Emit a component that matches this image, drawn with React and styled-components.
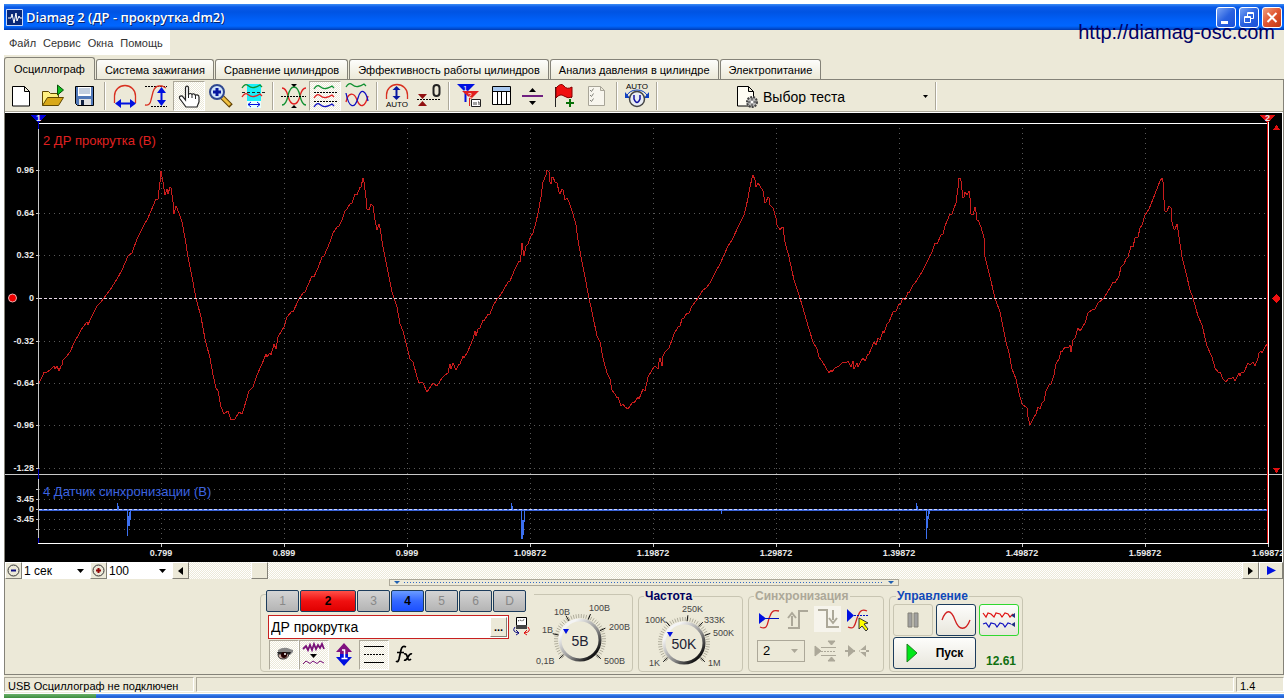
import { useState } from 'react';
import styled, { createGlobalStyle, css } from 'styled-components';

// Data
const wave =
  '39,383 43,375 44,372 46,373 50,370 54,366 55,369 57,366 59,371 61,366 62,365 63,360 67,356 70,352 75,341 78,336 81,330 87,322 88,325 90,320 97,306 100,303 104,298 110,290 117,279 122,270 128,256 132,253 137,239 143,227 148,218 156,199 158,199 160,182 161,171 163,182 165,195 167,189 168,194 170,187 171,188 173,202 173,212 174,214 176,206 179,213 182,222 185,238 188,257 192,277 196,298 201,317 205,339 210,358 213,375 216,388 218,391 221,407 224,414 228,411 231,420 235,419 239,412 242,414 244,408 249,391 253,387 257,375 262,364 266,354 267,357 270,353 271,355 274,344 276,349 278,337 284,327 287,317 292,311 293,312 299,299 ' +
  '303,293 305,292 312,276 314,277 316,272 318,268 322,257 324,256 327,249 330,242 333,233 337,227 339,226 342,220 345,211 347,209 350,204 352,203 355,194 357,195 360,187 361,187 363,178 364,182 366,198 367,209 369,210 371,204 373,206 375,220 377,230 379,224 380,228 383,247 388,272 392,292 394,298 397,307 400,324 403,331 407,347 410,359 413,362 417,377 419,383 422,382 423,383 427,392 431,386 433,383 437,386 442,378 444,376 448,373 450,364 451,369 453,363 456,370 459,364 460,364 463,356 464,358 468,351 473,339 475,331 476,336 478,329 480,328 483,320 484,321 488,314 490,314 493,306 497,299 499,297 503,291 508,282 510,281 515,269 519,261 520,262 521,255 522,243 524,256 526,246 528,244 530,238 533,233 536,222 538,213 541,197 543,182 546,175 547,170 549,172 550,182 551,184 552,177 553,177 555,182 557,183 559,192 560,194 562,189 563,190 565,200 567,198 569,202 573,214 576,225 578,240 581,257 585,277 589,298 592,312 597,336 600,342 603,358 607,373 610,379 612,390 615,394 617,398 618,397 621,406 623,404 625,407 628,409 ' +
  '630,406 633,402 634,403 638,397 639,399 643,389 645,391 648,377 652,370 655,366 658,369 659,362 660,358 662,366 663,356 665,352 669,348 673,337 674,334 678,327 680,326 682,319 684,318 687,313 689,313 692,306 693,305 698,298 703,290 706,288 710,283 716,271 720,264 724,255 728,246 732,240 740,223 744,215 746,207 748,198 750,187 752,178 753,175 755,180 756,187 758,183 760,186 763,191 765,203 766,202 768,197 769,198 770,205 773,208 776,218 777,225 780,230 782,227 783,227 785,242 789,257 794,280 800,298 805,315 809,329 813,342 817,349 819,357 822,361 826,368 829,373 831,370 832,372 835,368 839,366 843,362 846,363 848,361 851,367 853,361 854,369 857,363 858,367 861,361 863,358 865,361 868,354 869,354 874,342 876,345 878,338 880,340 883,331 884,333 887,324 889,322 893,312 896,311 899,304 900,305 903,298 905,300 908,292 909,293 913,285 915,283 922,272 927,262 932,252 935,243 937,244 941,235 943,234 945,226 950,214 952,214 954,208 956,203 958,188 959,178 ' +
  '960,178 961,181 963,198 964,197 965,192 967,195 969,191 970,198 971,214 973,215 975,207 976,212 977,220 978,220 981,227 984,238 985,257 990,277 995,298 1000,312 1006,342 1009,353 1012,369 1016,379 1019,393 1022,404 1027,408 1028,417 1030,425 1033,419 1036,414 1038,407 1040,409 1042,403 1044,401 1046,391 1049,385 1051,384 1054,375 1056,364 1059,359 1061,351 1062,352 1065,347 1069,347 1070,345 1071,352 1073,340 1075,338 1078,328 1080,331 1085,323 1088,313 1092,310 1095,309 1098,303 1104,298 1110,288 1113,282 1115,283 1119,276 1121,267 1124,264 1126,259 1128,257 1131,246 1133,247 1135,238 1138,237 1140,228 1142,225 1145,215 1149,209 1155,194 1160,181 1162,178 1163,182 1164,200 1165,211 1167,211 1169,206 1171,208 1172,222 1174,229 1175,229 1177,224 1178,230 1182,257 1186,273 1190,290 1193,298 1198,316 1202,325 1207,346 1212,357 1215,368 1218,372 1220,372 1223,379 1226,382 1229,378 1231,379 1233,377 1235,381 1239,373 1240,376 1241,373 1244,372 1248,363 1250,365 1253,362 1255,366 1258,358 1259,353 1261,351 1262,353 1264,349 1267,344';

const levels = [
  ['0.96', 170], ['0.64', 213], ['0.32', 255], ['0', 298],
  ['-0.32', 341], ['-0.64', 383], ['-0.96', 425], ['-1.28', 468],
];

const syncLevels = [['', 489], ['3.45', 499], ['0', 509], ['-3.45', 519], ['', 529]];

const times = [
  ['0.799', 161], ['0.899', 284], ['0.999', 407], ['1.09872', 530], ['1.19872', 653],
  ['1.29872', 776], ['1.39872', 899], ['1.49872', 1022], ['1.59872', 1145], ['1.69872', 1268],
];

const tabs = [
  'Осциллограф', 'Система зажигания', 'Сравнение цилиндров',
  'Эффективность работы цилиндров', 'Анализ давления в цилиндре', 'Электропитание',
];

const channels = ['1', '2', '3', '4', '5', '6', 'D'];

// Styled Components
const GlobalStyle = createGlobalStyle`
  * { box-sizing: border-box; }
  body {
    margin: 0;
    background: #fff;
    font: 11px/14px 'Liberation Sans', Arial, sans-serif;
    color: #000;
  }
  button, input, select { font: inherit; color: inherit; margin: 0; }
  svg { display: block; }
`;

const checker = css`
  background: repeating-conic-gradient(#fff 0 25%, #ece9d8 0 50%) 0 0 / 2px 2px;
`;

const Window = styled.div`
  position: relative;
  margin: 4px 4px 0;
  background: #ece9d8;
`;

const TitleBar = styled.header`
  display: flex;
  align-items: center;
  gap: 3px;
  height: 26px;
  padding: 0 2px;
  background: linear-gradient(#3c8cf4 0, #0a5ae8 3px, #0054e3 8px, #0060f8 16px, #0066ff 22px, #0048c8 25px, #0038b0 26px);
  h1 {
    flex: 1;
    margin: 0;
    color: #fff;
    font: 600 13px/20px 'Open Sans', sans-serif;
    text-shadow: 1px 1px #0a246a;
  }
`;

const CaptionButton = styled.button`
  width: 20px;
  height: 21px;
  padding: 0;
  border: 1px solid #fff;
  border-radius: 3px;
  background: ${({ $close }) =>
    $close ? 'linear-gradient(135deg, #f0a080, #e05430 50%, #c03810)' : 'linear-gradient(135deg, #7aa4f4, #2a62e0 50%, #1a50d8)'};
`;

const SiteLink = styled.a`
  position: absolute;
  top: 16px;
  right: 9px;
  color: #000066;
  font-size: 20px;
  line-height: 24px;
  text-decoration: none;
`;

const Menu = styled.nav`
  display: flex;
  gap: 7px;
  width: 166px;
  height: 25px;
  padding: 0 5px;
  background: #fff;
  button {
    padding: 0;
    border: 0;
    background: none;
    color: #333;
  }
`;

const Tabs = styled.div`
  display: flex;
  align-items: flex-end;
  gap: 1px;
  height: 24px;
`;

const Tab = styled.button`
  height: ${({ $active }) => ($active ? 23 : 20)}px;
  padding: 0 ${({ $active }) => ($active ? 9 : 8)}px;
  margin-bottom: ${({ $active }) => ($active ? -1 : 0)}px;
  border: 1px solid #848278;
  border-bottom: 0;
  border-radius: 3px 3px 0 0;
  background: ${({ $active }) => ($active ? '#ece9d8' : 'linear-gradient(#fdfdfb, #ece9d8)')};
  white-space: nowrap;
`;

const Body = styled.main`
  border: solid #848278;
  border-width: 1px 1px 0;
`;

const Toolbar = styled.div`
  display: flex;
  height: 33px;
  padding-top: 1px;
  border-bottom: 1px solid #fff;
  box-shadow: inset 0 -1px #aca899;
`;

const ToolButton = styled.button`
  width: ${({ $size }) => $size ?? 32}px;
  height: 30px;
  padding: 0;
  border: 1px solid transparent;
  background: none;
  ${({ $pressed }) => $pressed && css`
    ${checker}
    border-color: #aca899 #fff #fff #aca899;
  `}
  svg { margin: -1px; }
`;

const Separator = styled.span`
  width: 2px;
  height: 28px;
  margin: 1px 3px;
  border-left: 1px solid #aca899;
  border-right: 1px solid #fff;
`;

const TestPicker = styled.label`
  display: flex;
  align-items: center;
  gap: 5px;
  width: 198px;
  margin-left: 73px;
  padding-right: 3px;
`;

const PlainSelect = styled.select`
  appearance: none;
  flex: 1;
  min-width: 0;
  height: 100%;
  padding: 0 ${({ $pad }) => $pad ?? 3}px;
  border: 0;
  border-radius: 0;
  background: ${({ $fill }) => $fill ?? 'transparent'};
  font-size: ${({ $font }) => $font ?? 12}px;
  &:disabled { opacity: 1; }
`;

const SelectArrow = styled.svg`
  width: 7px;
  height: 4px;
  margin-right: 6px;
  pointer-events: none;
`;

const Plot = styled.svg`
  width: 100%;
  border-right: 1px solid #fff;
  background: #000;
  text { font-family: 'Liberation Sans', Arial, sans-serif; }
`;

const AxisLabel = styled.text`
  font-size: 9px;
  font-weight: bold;
  fill: #e8e8e8;
`;

const ScrollRow = styled.div`
  display: flex;
  height: 17px;
`;

const RaisedButton = styled.button`
  flex: none;
  width: ${({ $width }) => $width ?? 17}px;
  padding: 0;
  border: 1px solid;
  border-color: #fff #848278 #848278 #fff;
  background: #ece9d8;
  font-weight: bold;
  line-height: 8px;
  svg { margin: auto; }
`;

const Combo = styled.label`
  display: flex;
  align-items: center;
  width: ${({ $width }) => $width}px;
  background: #fff;
`;

const ScrollTrack = styled.input`
  appearance: none;
  flex: 1;
  min-width: 0;
  height: 17px;
  ${checker}
  &::-webkit-slider-thumb {
    appearance: none;
    width: 17px;
    height: 17px;
    border: 1px solid;
    border-color: #fff #848278 #848278 #fff;
    background: #ece9d8;
  }
`;

const Splitter = styled.div`
  display: flex;
  align-items: center;
  gap: 4px;
  width: 510px;
  height: 7px;
  margin: 0 auto;
  padding: 0 4px;
  border: 1px solid #aca899;
`;

const Dots = styled.span`
  flex: 1;
  height: 1px;
  background: repeating-linear-gradient(90deg, #316ac5 0 1px, transparent 1px 3px);
`;

const Controls = styled.section`
  display: flex;
  justify-content: center;
  gap: 5px;
  height: 88px;
  padding: 3px 5px 0 0;
`;

const Group = styled.fieldset`
  min-width: 0;
  width: ${({ $width }) => $width}px;
  height: 83px;
  margin: 0;
  padding: 0 3px;
  border: 1px solid #c8c5b2;
  border-radius: 4px;
  legend {
    margin-left: ${({ $indent }) => $indent ?? 2}px;
    padding: 0 1px;
    color: ${({ $color }) => $color};
    font-size: 12px;
    font-weight: bold;
    line-height: 14px;
  }
`;

const ChannelGroup = styled.div`
  display: flex;
  width: 373px;
  height: 78px;
  margin-top: 5px;
  padding-left: 5px;
  border: 1px solid #c8c5b2;
  border-radius: 4px;
`;

const ChannelPanel = styled.div`
  width: 268px;
  margin-top: -5px;
`;

const ChannelRow = styled.div`
  display: flex;
  gap: 1px;
  padding-bottom: 3px;
  background: #ece9d8;
`;

const fills = { 2: 'linear-gradient(#ff5048, #f01010 50%, #e00000)', 4: 'linear-gradient(#6a9cff, #3468ff 50%, #1c50ff)' };

const ChannelButton = styled.button`
  width: ${({ $ch }) => ($ch === '2' ? 56 : 33)}px;
  height: 22px;
  padding: 0;
  border: 1px solid #1c3c5c;
  border-radius: 2px;
  background: ${({ $ch }) => fills[$ch] ?? 'linear-gradient(#d4d4d4, #b4b4b4)'};
  color: ${({ $ch }) => (fills[$ch] ? '#000' : '#888')};
  font-size: 12px;
  font-weight: ${({ $ch }) => (fills[$ch] ? 'bold' : 'normal')};
`;

const NameRow = styled.div`
  display: flex;
  gap: 3px;
  margin-left: 2px;
`;

const NameBox = styled.div`
  display: flex;
  width: 241px;
  height: 24px;
  padding: 1px;
  border: 1px solid #c82020;
  background: #fff;
  input {
    flex: 1;
    min-width: 0;
    padding: 0 1px;
    border: 0;
    font-size: 14px;
  }
`;

const IconRow = styled.div`
  display: flex;
  margin: 1px 0 0 3px;
`;

const Knob = styled.svg`
  flex: none;
  text {
    font: 9px 'Liberation Sans', Arial, sans-serif;
    fill: #444;
  }
  text.value {
    font-size: 14px;
    fill: #223;
    text-anchor: middle;
  }
`;

const SyncIcons = styled.div`
  display: flex;
  align-items: center;
  gap: ${({ $gap }) => $gap ?? 5}px;
  height: ${({ $height }) => $height}px;
`;

const SyncCombo = styled.label`
  display: flex;
  align-items: center;
  width: 48px;
  height: 22px;
  margin-left: 5px;
  border: 1px solid #aca899;
`;

const RunGrid = styled.div`
  display: grid;
  grid-template-columns: 40px 40px 40px;
  grid-template-rows: 32px 32px;
  gap: 1px 3px;
  padding-top: 1px;
`;

const RunButton = styled.button`
  display: flex;
  align-items: center;
  justify-content: center;
  gap: 18px;
  grid-column: span ${({ $span }) => $span ?? 1};
  padding: 0;
  border: 1px solid ${({ $edge }) => $edge ?? '#1c3c5c'};
  border-radius: 3px;
  background: ${({ $edge }) => ($edge === '#c8c5b2' ? '#ece9d8' : 'linear-gradient(#fdfdfb, #e8e6dc)')};
  font-size: 12px;
  font-weight: bold;
`;

const Voltage = styled.output`
  align-self: end;
  margin-left: 7px;
  color: #107010;
  font-size: 12px;
  font-weight: bold;
  line-height: 16px;
`;

const StatusBar = styled.footer`
  display: flex;
  gap: 2px;
  height: 20px;
  padding: 2px 0 1px;
  border-top: 1px solid #848278;
  border-bottom: 1px solid #fff;
`;

const StatusCell = styled.span`
  flex: ${({ $width }) => ($width ? `0 0 ${$width}px` : 1)};
  padding: 1px 3px;
  border: 1px solid;
  border-color: #aca899 #fff #fff #aca899;
`;

const TaskStrip = styled.div`
  height: 4px;
  background:
    linear-gradient(#6ab06a, #3c8c3c) 0 0 / 92px 4px no-repeat,
    linear-gradient(#5a9cf8, #2464d8 2px, #2464d8);
`;

// Icons
const Sine = ({ y, color, x = 4, ...rest }) => (
  <path
    d={`M${x} ${y + 2}q3 -5 6 -2.500t6 2t6 -2.500l2 2`}
    fill='none' stroke={color} strokeWidth='1.300' {...rest}
  />
);

const icons = {
  new: <path d='M7.500 6.500h12l5 5v14.500h-17zM19.500 6.500v5h5' fill='#fff' stroke='#000' />,
  open: (
    <>
      <path d='M5.500 25.500v-14h6l2 2h8v4' fill='#fff080' stroke='#604800' />
      <path d='M5.500 25.500l5 -8h16l-5 8z' fill='#d8a818' stroke='#604800' />
      <path d='M20.500 5l6 5l-6 5z' fill='#10c020' stroke='#085008' />
    </>
  ),
  save: (
    <>
      <path d='M6.500 6.500h18v19h-16l-2 -2z' fill='#5078b8' stroke='#000' />
      <path d='M9 7h13v9h-13z' fill='#fff' />
      <path d='M10 9h11M10 11h11M10 13h11' stroke='#88a0c0' />
      <path d='M10 19h12v6h-12z' fill='#e0e0e0' />
      <path d='M12 20h3v5h-3z' fill='#102040' />
    </>
  ),
  span: (
    <>
      <path d='M5.500 23v-7a10.500 10.500 0 0 1 21 0v7' fill='none' stroke='#d83020' strokeWidth='1.300' />
      <path d='M11 23.500h11' stroke='#0010e0' strokeWidth='2' />
      <path d='M6 23.500l6 -4.500v9zM27 23.500l-6 -4.500v9z' fill='#0010e0' />
    </>
  ),
  amplitude: (
    <>
      <path d='M4 6.500h22M10 26.500h16' stroke='#000' strokeDasharray='2 1' />
      <path d='M4 25q5 1 6 -5l2 -8q2 -6 6 -6h3l4 2' fill='none' stroke='#d83020' strokeWidth='1.300' />
      <path d='M20.500 12v9' stroke='#0010e0' strokeWidth='2' />
      <path d='M20.500 7l4.500 6h-9zM20.500 26l4.500 -6h-9z' fill='#0010e0' />
    </>
  ),
  hand: (
    <>
      <path
        d='M13 27l-6 -8c-2 -3 2 -4 3 -2l2.500 3v-12c0 -2.500 3 -2.500 3 0v7c0 -2 3.500 -2 3.500 0c0 -2 3.500 -1.500 3.500 1c0 -2 3.500 -1.500 3.500 1v5l-2 5z'
        fill='#fff' stroke='#222' strokeWidth='1.200'
      />
      <path d='M15.500 14v4M19 15v3M22.500 16v3' stroke='#222' />
    </>
  ),
  zoom: (
    <>
      <path d='M17 17l9 9' stroke='#604000' strokeWidth='5' />
      <path d='M17 17l8 8' stroke='#f0c040' strokeWidth='3' />
      <circle cx='12' cy='12' r='7' fill='#d0e4f8' stroke='#304890' strokeWidth='2' />
      <path d='M8 12h8M12 8v8' stroke='#0818a0' strokeWidth='3' />
    </>
  ),
  fit: (
    <>
      <path d='M10 4h14v18h-14z' fill='#18f0f8' />
      <path d='M10 21h14v7h-14z' fill='#e8ffff' />
      <Sine y={6} color='#109030' x={5} />
      <Sine y={15} color='#e02020' x={5} />
      <path d='M5 12.500h23' stroke='#222' strokeDasharray='3 2' />
      <path d='M11 24.500h12M14 22l-3 2.500l3 2.500M20 22l3 2.500l-3 2.500' stroke='#0010e0' fill='none' />
    </>
  ),
  overlap: (
    <>
      <path d='M5 8q4 0 6 8t6 8t6 -8t6 -8' fill='none' stroke='#e02020' strokeWidth='1.300' />
      <path d='M5 25q4 0 6 -9t6 -9t6 9t6 9' fill='none' stroke='#109030' strokeWidth='1.300' />
      <path d='M4 16.500h25' stroke='#000' strokeDasharray='2 1' />
      <path d='M14 4h6l-3 3zM14 28h6l-3 -3z' />
    </>
  ),
  stack: (
    <>
      <Sine y={7} color='#109030' x={5} />
      <Sine y={16} color='#e02020' x={5} />
      <Sine y={25} color='#1010c0' x={5} />
      <path d='M5 12.500h23M5 21.500h23' stroke='#000' strokeDasharray='2 1' />
    </>
  ),
  crossed: (
    <>
      <Sine y={5} color='#109030' x={5} />
      <path d='M5 22c2 -10 8 -10 11 -2s8 8 11 -4' fill='none' stroke='#e02020' strokeWidth='1.300' />
      <path d='M5 13c3 16 9 16 12 5s8 -7 10 3' fill='none' stroke='#1010c0' strokeWidth='1.300' />
    </>
  ),
  autoHeight: (
    <>
      <path d='M5.500 19v-4a10.500 10.500 0 0 1 21 0v4' fill='none' stroke='#d83020' strokeWidth='1.300' />
      <path d='M15.500 8v9' stroke='#0818a0' strokeWidth='2' />
      <path d='M15.500 6l4 4h-8zM15.500 20l4 -4h-8z' fill='#0818a0' />
      <text x='16' y='27' fontSize='8' textAnchor='middle'>AUTO</text>
    </>
  ),
  zero: (
    <>
      <path d='M5 14h9l-4.500 5zM5 26h9l-4.500 -5z' fill='#901010' />
      <path d='M4 19.500h24' stroke='#000' strokeDasharray='2 1' />
      <rect x='20.500' y='5' width='6' height='11' rx='3' fill='none' stroke='#222' strokeWidth='2' />
    </>
  ),
  markers: (
    <>
      <path d='M4 4h18l-9 9z' fill='#0010e0' />
      <path d='M12.500 5v17' stroke='#0010e0' strokeWidth='2' />
      <path d='M9 11h17l-8 8z' fill='#e02020' />
      <path d='M16.500 12v14' stroke='#e02020' />
      <path d='M18.500 19.500h9v7h-9z' fill='#fff' stroke='#222' />
      <path d='M21 22v3M23 22v3M25 22h1v3' stroke='#444' fill='none' />
      <text x='10' y='11' fontSize='8' fill='#fff'>1</text>
      <text x='15' y='18' fontSize='7' fill='#fff'>2</text>
    </>
  ),
  table: (
    <>
      <path d='M7.500 6.500h18v18h-18z' fill='#fff' stroke='#000' />
      <path d='M8 7h17v4h-17z' fill='#a8c8f0' />
      <path d='M7 11.500h19M12.500 11v14M16.500 11v14M21.500 11v14' stroke='#000' />
    </>
  ),
  split: (
    <>
      <path d='M5 16h21' stroke='#702080' strokeWidth='2' />
      <path d='M12 12h7l-3.500 -4zM12 21h7l-3.500 4z' />
    </>
  ),
  flag: (
    <>
      <path d='M6.500 7v20M22.500 7v11' stroke='#222' />
      <path d='M7 8q5 -6 8 -2t8 1v10q-4 2 -8 -1t-8 2z' fill='#f01010' stroke='#800' />
      <path d='M17 23h8M21 19v8' stroke='#087008' strokeWidth='2' />
    </>
  ),
  checklist: (
    <>
      <path d='M7.500 6.500h12l4 4v15h-16zM19.500 6.500v4h4' fill='#f8f6ee' stroke='#a8a598' />
      <path d='M9 10l1.500 1.500l2 -3M9 15l1.500 1.500l2 -3M9 20l1.500 1.500l2 -3' stroke='#808078' fill='none' />
    </>
  ),
  autoVolt: (
    <>
      <text x='16' y='9' fontSize='8' textAnchor='middle'>AUTO</text>
      <path d='M5 17q3 -7 11 -7t11 7' fill='none' stroke='#1040c0' />
      <path d='M4 12v6h5zM28 12v6h-5z' fill='#1040c0' />
      <circle cx='16' cy='19' r='7.500' fill='#e8ecf4' stroke='#444' strokeWidth='1.500' />
      <path d='M13 15v4q3 7 6 0v-4' fill='none' stroke='#1010a0' strokeWidth='1.500' />
    </>
  ),
  eye: (
    <>
      <path d='M9 10q6 -4 12 -1l3 1v2l-3 3h-12z' fill='#888' />
      <path d='M8 12h14l-1 2h-12z' fill='#222' />
      <path d='M9 14h11q-1 5 -6 5t-5 -5' fill='#c8a8a0' stroke='#333' />
      <circle cx='15' cy='15' r='3' fill='#200' />
      <circle cx='16' cy='14' r='1' fill='#fff' />
    </>
  ),
  filter: (
    <>
      <path d='M4 9l3 -3l2 4l2 -5l2 5l2 -6l2 5l2 -4l2 3l2 -4l2 5' fill='none' stroke='#781078' strokeWidth='1.800' />
      <path d='M11 14h7l-3.500 4z' />
      <path d='M4 24l3 -3l4 2.500l3 -2.500l4 2.500l3 -2.500l4 2' fill='none' stroke='#781078' />
    </>
  ),
  invert: (
    <>
      <path d='M15 3l8 9h-4v3h-8v-3h-4z' fill='#801080' />
      <path d='M15 26l8 -9h-4v-3h-8v3h-4z' fill='#0010e0' />
      <path d='M13 10h2.500v8M12.500 18.500h6' stroke='#fff' strokeWidth='1.500' fill='none' />
    </>
  ),
  bounds: (
    <>
      <path d='M5 6.500h20M5 22.500h20' stroke='#000' />
      <path d='M5 14.500h20' stroke='#000' strokeDasharray='2 1' />
    </>
  ),
  fx: (
    <path
      d='M17 7q-4 -2 -5 3l-2 9q-1 4 -3 2M8 12.500h7M15 14q2 -1 3 2l1 3q1 2 3 0M23 14q-2 -1 -4 3t-4 3'
      fill='none' stroke='#000' strokeWidth='1.700'
    />
  ),
};

const Icon = ({ name, size = 32 }) => (
  <svg width={size} height='30' viewBox={size === 32 ? '0 1 32 30' : '0 0 30 30'} aria-hidden='true'>
    {icons[name]}
  </svg>
);

const Arrow = () => (
  <SelectArrow viewBox='0 0 7 4' aria-hidden='true'>
    <path d='M0 0h7l-3.500 4z' />
  </SelectArrow>
);

// Toolbar layout, null is a separator
const tools = [
  'new', 'open', 'save', null, 'span', 'amplitude', 'hand', 'zoom', 'fit', null,
  'overlap', 'stack', 'crossed', null, 'autoHeight', 'zero', null,
  'markers', 'table', 'split', 'flag', 'checklist', null, 'autoVolt', null,
];

const Scope = () => (
  <Plot viewBox='5 113 1277 449' role='img' aria-label='Осциллограмма' shapeRendering='crispEdges'>
    <g stroke='#585858' strokeDasharray='1 4'>
      {levels.filter(([label]) => label !== '0').map(([label, y]) => (
        <path key={label} d={`M39 ${y + 0.5}H1266`} />
      ))}
      {syncLevels.map(([, y]) => <path key={y} d={`M39 ${y + 0.5}H1266`} />)}
      {times.slice(0, -1).map(([label, x]) => <path key={label} d={`M${x + 0.5} 128V542`} />)}
    </g>

    <path d='M5 474.500H1282' stroke='#c8c8c8' />
    <path d='M38.500 128V543M36 489.500h2M36 529.500h2' stroke='#c8c8c8' />
    <path d='M38 123.500H1268M38 543.500H1269' stroke='#fff' />
    <path d='M38.500 120V129M38.500 469V479M38.500 538V543' stroke='#0000c0' />

    <polyline points={wave} fill='none' stroke='#c81c1c' />
    <path d='M39 298.500H1266' stroke='#e8d8e8' strokeDasharray='3 2' />

    <path d='M39 510H1267' stroke='#3c64d8' strokeWidth='2' />
    <path
      d='M117.500 503v7M118.500 506v4M127.500 509v27M128.500 516v10M129.500 512v14M130.500 509v11M511.500 503v7M512.500 506v4M521.500 509v30M522.500 520v19M523.500 520v15M524.500 509v13M721.500 509v5M916.500 503v7M917.500 506v4M926.500 509v30M927.500 516v12M928.500 509v10M929.500 509v5'
      stroke='#3c70f0'
    />
    <path d='M39 509.500H1266' stroke='#d0d8f8' strokeDasharray='3 2' />

    <path d='M1267.500 122V543' stroke='#e01010' />
    <path d='M1268.500 122V543' stroke='#fff' />
    <path d='M31 115h15l-7.500 8z' fill='#0000d8' />
    <path d='M1260 115h15l-7.500 8z' fill='#e01010' />
    <path d='M1273 130h7l-3.500 -5zM1273 468h7l-3.500 5z' fill='#e01010' />
    <path d='M1276.500 294l4 4.500l-4 4.500l-4 -4.500z' fill='#f01010' />
    <circle cx='12.500' cy='298' r='4' fill='#f00000' stroke='#f0b0b0' shapeRendering='auto' />
    <AxisLabel x='36' y='121'>1</AxisLabel>
    <AxisLabel x='1265' y='121'>2</AxisLabel>

    {[...levels, ...syncLevels].map(([label, y]) => (
      <g key={label + y}>
        <path d={`M36 ${y + 0.5}h2`} stroke='#c8c8c8' />
        <AxisLabel x='34' y={y + 3} textAnchor='end'>{label}</AxisLabel>
      </g>
    ))}
    {times.map(([label, x]) => (
      <g key={label}>
        <path d={`M${x + 0.5} 544v3`} stroke='#c8c8c8' />
        <AxisLabel x={x} y='556' textAnchor='middle'>{label}</AxisLabel>
      </g>
    ))}
    <text x='43' y='145' fontSize='13' fill='#e02020'>2 ДР прокрутка (В)</text>
    <text x='43' y='496' fontSize='13' fill='#3c64e0'>4 Датчик синхронизации (В)</text>
  </Plot>
);

const Dial = ({ id, value, labels, majors, width, cx, cy }) => {
  const ticks = Array.from({ length: 46 }, (_, i) => -225 + i * 6);
  const ray = (deg, from, to) => {
    const c = Math.cos((deg * Math.PI) / 180);
    const s = Math.sin((deg * Math.PI) / 180);
    return `M${cx + c * from} ${cy + s * from}L${cx + c * to} ${cy + s * to}`;
  };

  return (
    <Knob width={width} height='74' viewBox={`0 0 ${width} 74`} role='img' aria-label={value}>
      <defs>
        <linearGradient id={id} x1='0' y1='0' x2='1' y2='1'>
          <stop offset='0.200' stopColor='#f4f4f4' />
          <stop offset='0.600' stopColor='#888' />
          <stop offset='0.900' stopColor='#000' />
        </linearGradient>
      </defs>
      <path d={ticks.map((deg) => ray(deg, 22, 26)).join('')} stroke='#b0ad9c' />
      <path d={majors.map((deg) => ray(deg, 22, 28)).join('')} stroke='#111' />
      <circle cx={cx} cy={cy} r='20' fill='#ece9d8' stroke={`url(#${id})`} strokeWidth='3' />
      <path d={`M${cx - 17} ${cy - 11}h6l-3 5z`} fill='#0010e0' />
      <text className='value' x={cx} y={cy + 6}>{value}</text>
      {labels.map(([label, x, y]) => <text key={label} x={x} y={y}>{label}</text>)}
    </Knob>
  );
};

const App = () => {
  // State
  const [activeTab, setActiveTab] = useState(tabs[0]);
  const [name, setName] = useState('ДР прокрутка');

  return (
    <>
      <GlobalStyle />
      <Window>
        <TitleBar>
          <svg width='17' height='17' aria-hidden='true'>
            <path d='M0.500 0.500h16v16h-16z' fill='#082878' stroke='#c8d8f8' />
            <path d='M2 9h3l1 -4l2 9l2 -10l1 8l2 -5l1 2h2' fill='none' stroke='#fff' />
          </svg>
          <h1>Diamag 2 (ДР - прокрутка.dm2)</h1>
          <CaptionButton aria-label='Свернуть'>
            <svg width='18' height='19'><path d='M4 13h7v3h-7z' fill='#fff' /></svg>
          </CaptionButton>
          <CaptionButton aria-label='Восстановить'>
            <svg width='18' height='19'>
              <path d='M7.500 8v-3.500h6v6h-3M4.500 8.500h6v6h-6zM4 9.500h7M7 5.500h7' fill='none' stroke='#fff' />
            </svg>
          </CaptionButton>
          <CaptionButton $close aria-label='Закрыть'>
            <svg width='18' height='19'><path d='M4.500 5l9 9M13.500 5l-9 9' stroke='#fff' strokeWidth='2' /></svg>
          </CaptionButton>
        </TitleBar>
        <SiteLink href='#'>http://diamag-osc.com</SiteLink>

        <Menu>
          {['Файл', 'Сервис', 'Окна', 'Помощь'].map((item) => <button key={item}>{item}</button>)}
        </Menu>

        <Tabs>
          {tabs.map((tab) => (
            <Tab key={tab} $active={tab === activeTab} onClick={() => setActiveTab(tab)}>{tab}</Tab>
          ))}
        </Tabs>

        <Body>
          <Toolbar>
            {tools.map((tool, i) =>
              tool ? (
                <ToolButton key={tool} $pressed={tool === 'hand' || tool === 'stack'} aria-label={tool}>
                  <Icon name={tool} />
                </ToolButton>
              ) : (
                <Separator key={i} />
              )
            )}
            <TestPicker>
              <svg width='24' height='26' aria-hidden='true'>
                <path d='M3.500 2.500h11l5 5v14.500h-16zM14.500 2.500v5h5' fill='#fffdf4' stroke='#000' />
                <circle cx='18' cy='18' r='5' fill='#b8b8b8' stroke='#444' strokeWidth='2' strokeDasharray='2 1' />
                <path d='M14 18h8M18 14v8' stroke='#333' />
                <circle cx='18' cy='18' r='1.500' fill='#fff' />
              </svg>
              <PlainSelect $font={14} $pad={0} aria-label='Выбор теста'>
                <option>Выбор теста</option>
              </PlainSelect>
              <svg width='7' height='3' aria-hidden='true'><path d='M1 0h5l-2.500 3z' /></svg>
            </TestPicker>
            <Separator />
          </Toolbar>

          <Scope />

          <ScrollRow>
            <RaisedButton aria-label='Уменьшить'>
              <svg width='15' height='15'>
                <circle cx='7.500' cy='7.500' r='5.500' fill='none' stroke='#333' />
                <path d='M5 7.500h5' stroke='#101080' strokeWidth='2' />
              </svg>
            </RaisedButton>
            <Combo $width={68}>
              <PlainSelect $pad={2} aria-label='Развёртка'><option>1 сек</option></PlainSelect>
              <Arrow />
            </Combo>
            <RaisedButton aria-label='Увеличить'>
              <svg width='15' height='15'>
                <circle cx='7.500' cy='7.500' r='5.500' fill='none' stroke='#333' />
                <path d='M5 7.500h5M7.500 5v5' stroke='#900808' strokeWidth='2' />
              </svg>
            </RaisedButton>
            <Combo $width={65}>
              <PlainSelect $pad={2} aria-label='Масштаб'><option>100</option></PlainSelect>
              <Arrow />
            </Combo>
            <RaisedButton aria-label='Влево'>
              <svg width='5' height='8'><path d='M5 0v8l-5 -4z' /></svg>
            </RaisedButton>
            <ScrollTrack type='range' defaultValue={6} aria-label='Прокрутка' />
            <RaisedButton aria-label='Вправо'>
              <svg width='5' height='8'><path d='M0 0v8l5 -4z' /></svg>
            </RaisedButton>
            <RaisedButton $width={24} aria-label='Воспроизвести'>
              <svg width='9' height='9'><path d='M0 0v9l9 -4.500z' fill='#0010e0' /></svg>
            </RaisedButton>
          </ScrollRow>

          <Splitter>
            <svg width='6' height='3'><path d='M0 0h6l-3 3z' fill='#2060b0' /></svg>
            <Dots />
            <svg width='6' height='3'><path d='M0 0h6l-3 3z' fill='#2060b0' /></svg>
          </Splitter>

          <Controls>
            <ChannelGroup>
              <ChannelPanel>
                <ChannelRow>
                  {channels.map((ch) => <ChannelButton key={ch} $ch={ch}>{ch}</ChannelButton>)}
                </ChannelRow>
                <NameRow>
                  <NameBox>
                    <input aria-label='Название канала' value={name} onChange={(e) => setName(e.target.value)} />
                    <RaisedButton>...</RaisedButton>
                  </NameBox>
                  <svg width='19' height='24' aria-hidden='true'>
                    <path d='M4.500 2.500h10v8h-10z' fill='#fff' stroke='#000' />
                    <path d='M4 10h11v4h-11z' fill='#444' />
                    <path d='M6 6l2 -1l2 1l3 -2' stroke='#000' fill='none' strokeDasharray='1 1' />
                    <path d='M3 12q-4 5 4 6M4 15l3 3l-3 2' fill='none' stroke='#101080' />
                    <path d='M16 12q4 5 -4 6M15 15l-3 3l3 2' fill='none' stroke='#e01010' />
                  </svg>
                </NameRow>
                <IconRow>
                  {['eye', 'filter', 'invert', 'bounds', 'fx'].map((icon) => (
                    <ToolButton key={icon} $size={30} $pressed={icon !== 'invert' && icon !== 'fx'} aria-label={icon}>
                      <Icon name={icon} size={30} />
                    </ToolButton>
                  ))}
                </IconRow>
              </ChannelPanel>
              <Dial
                id='volt' value='5В' width={98} cx={46} cy={45}
                majors={[138, 193, 240, 292, 335, 42]}
                labels={[['0,1В', 2, 69], ['1В', 8, 38], ['10В', 20, 20], ['100В', 55, 16], ['200В', 75, 35], ['500В', 70, 69]]}
              />
            </ChannelGroup>

            <Group $width={105} $color='#000060'>
              <legend>Частота</legend>
              <Dial
                id='freq' value='50K' width={98} cx={42} cy={40}
                majors={[138, 230, 278, 312, 340, 42]}
                labels={[['1K', 7, 63], ['100K', 3, 20], ['250K', 40, 9], ['333K', 62, 20], ['500K', 71, 33], ['1M', 66, 63]]}
              />
            </Group>

            <Group $width={136} $color='#aca899'>
              <legend>Синхронизация</legend>
              <SyncIcons $height={32}>
                <svg width='28' height='26'>
                  <path d='M8 21c9 4 7 -6 10 -11c2 -6 5 -6 9 -5' fill='none' stroke='#d02020' strokeWidth='1.300' />
                  <path d='M7 12.500h20' stroke='#0010c0' /><path d='M7 7v11l7 -5.500z' fill='#0010e0' />
                </svg>
                <svg width='24' height='26' stroke='#aca899' strokeWidth='2' fill='none'>
                  <path d='M3 22h11v-17h9M7 20v-10M3 12l4 -5l4 5' />
                </svg>
                <svg width='27' height='26'>
                  <path d='M0 0h27v26h-27z' fill='#f6f4ec' />
                  <path d='M4 4h9v17h12M19 4v10M15 12l4 5l4 -5' stroke='#aca899' strokeWidth='2' fill='none' />
                </svg>
                <svg width='26' height='26'>
                  <path d='M2 21c8 4 7 -6 10 -11c2 -6 5 -7 9 -5' fill='none' stroke='#d02020' strokeWidth='1.300' />
                  <path d='M2 9.500h21' stroke='#0010c0' strokeDasharray='2 1' />
                  <path d='M1 3v13l7 -6.500z' fill='#0010e0' />
                  <path d='M13 12l9 5l-4 1l4 5l-2 2l-4 -5l-3 3z' fill='#ff0' stroke='#333' />
                </svg>
              </SyncIcons>
              <SyncIcons $height={32} $gap={8}>
                <SyncCombo>
                  <PlainSelect disabled $pad={5} $font={13} aria-label='Канал'><option>2</option></PlainSelect>
                  <SelectArrow viewBox='0 0 7 4'><path d='M0 0h7l-3.500 4z' fill='#aca899' /></SelectArrow>
                </SyncCombo>
                <svg width='24' height='22' fill='#aca899' stroke='#aca899'>
                  <path d='M2 6v10l6 -5z' /><path d='M8 7.500h15M8 15.500h15' />
                  <path d='M8 11.500h15' strokeDasharray='2 1' /><path d='M15 1h7l-3.500 4zM15 21h7l-3.500 -4z' />
                </svg>
                <svg width='24' height='22' fill='#aca899'>
                  <path d='M3 5l7 6l-7 6zM21 5l-7 6l7 6zM0 10h10v2h-10zM14 10h10v2h-10z' />
                </svg>
              </SyncIcons>
            </Group>

            <Group $width={134} $color='#1048b8' $indent={3}>
              <legend>Управление</legend>
              <RunGrid>
                <RunButton $edge='#c8c5b2' aria-label='Пауза'>
                  <svg width='12' height='16'>
                    <path d='M1 1h4v14h-4zM7 1h4v14h-4z' fill='#a0a0a0' stroke='#848278' />
                  </svg>
                </RunButton>
                <RunButton aria-label='Одиночный'>
                  <svg width='30' height='22'>
                    <path d='M1 11c4 -11 9 -11 13 0s11 11 15 0' fill='none' stroke='#d02020' strokeWidth='1.300' />
                  </svg>
                </RunButton>
                <RunButton $edge='#30d830' aria-label='Непрерывный'>
                  <svg width='34' height='22' fill='none'>
                    <path d='M1 4l3 4l2 -4l3 1l3 3l2 -4l4 1l2 3l3 -4l3 1l2 3l3 -3' stroke='#e01010' strokeWidth='1.200' />
                    <path d='M1 15l3 -1l3 4l2 -4l4 1l2 3l3 -4l3 1l2 3l3 -4l3 1' stroke='#1010c0' strokeWidth='1.200' />
                    <path d='M33 4v5l-4 -2.500zM33 13v5l-4 -2.500z' fill='#203080' />
                  </svg>
                </RunButton>
                <RunButton $span={2}>
                  <svg width='12' height='20'><path d='M1 1v18l10 -9z' fill='#00e818' stroke='#208020' /></svg>
                  Пуск
                </RunButton>
                <Voltage>12.61</Voltage>
              </RunGrid>
            </Group>
          </Controls>
        </Body>

        <StatusBar>
          <StatusCell $width={190}>USB Осциллограф не подключен</StatusCell>
          <StatusCell />
          <StatusCell $width={48}>1.4</StatusCell>
        </StatusBar>
        <TaskStrip />
      </Window>
    </>
  );
};

export default App;
